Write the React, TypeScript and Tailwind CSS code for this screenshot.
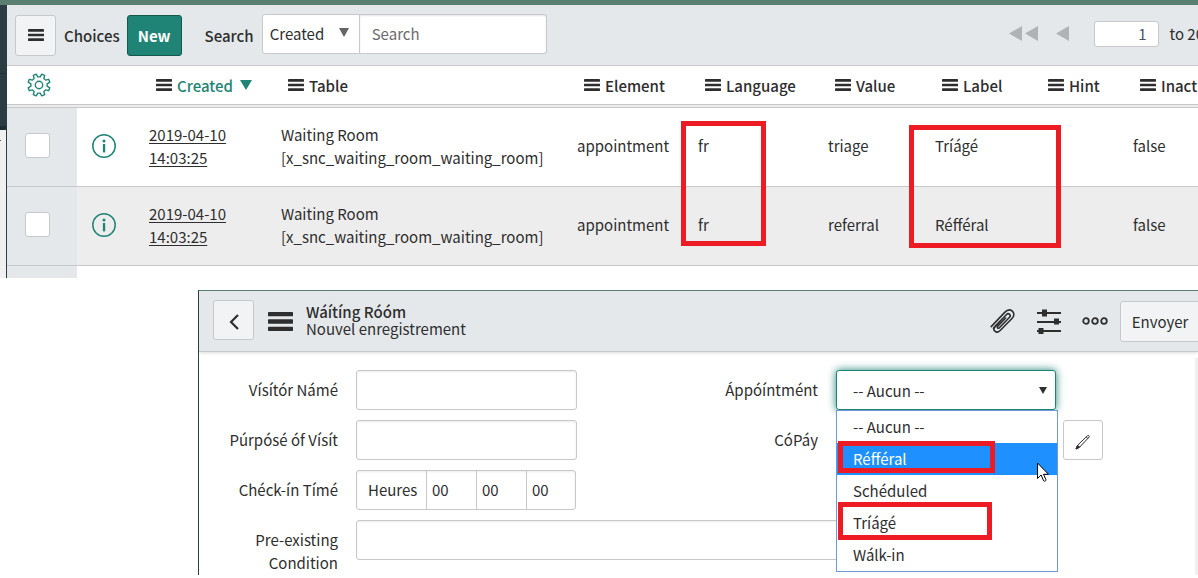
import type { ReactNode } from "react";

const columns = ["Created", "Table", "Element", "Language", "Value", "Label", "Hint", "Inactive"];

const records = [
  { value: "triage", label: "Tríágé" },
  { value: "referral", label: "Réfféral" },
];

const options = ["-- Aucun --", "Réfféral", "Schéduled", "Tríágé", "Wálk-in"];

// Eight teeth, each described by [angle offset in degrees, radius].
const tooth = [
  [-14, 8.2],
  [-8, 11.2],
  [8, 11.2],
  [14, 8.2],
];

const gearPoints = Array.from({ length: 8 }, (_, i) =>
  tooth.map(([offset, radius]) => {
    const angle = ((i * 45 + 22.5 + offset) * Math.PI) / 180;
    return `${(12 + radius * Math.cos(angle)).toFixed(2)},${(12 + radius * Math.sin(angle)).toFixed(2)}`;
  }).join(" "),
).join(" ");

function Bars({ className }: { className: string }) {
  return (
    <svg viewBox="0 0 16 12" className={className} fill="currentColor" preserveAspectRatio="none" aria-hidden="true">
      <rect y="0" width="16" height="2.7" rx="0.4" />
      <rect y="4.65" width="16" height="2.7" rx="0.4" />
      <rect y="9.3" width="16" height="2.7" rx="0.4" />
    </svg>
  );
}

function Gear() {
  return (
    <svg viewBox="0 0 24 24" className="size-6" fill="none" stroke="currentColor" strokeWidth="1.4" strokeLinejoin="round" aria-hidden="true">
      <polygon points={gearPoints} />
      <circle cx="12" cy="12" r="3.7" />
    </svg>
  );
}

function Info() {
  return (
    <svg viewBox="0 0 24 24" className="block size-6" fill="none" aria-hidden="true">
      <circle cx="12" cy="12" r="11.2" stroke="currentColor" strokeWidth="1.5" />
      <circle cx="12" cy="7" r="1.5" fill="currentColor" />
      <rect x="10.9" y="10" width="2.3" height="8.4" fill="currentColor" />
    </svg>
  );
}

function Field({ id, label, children }: { id: string; label: string; children: ReactNode }) {
  return (
    <div className="flex min-h-10 gap-[18px]">
      <label htmlFor={id} className="w-[122px] shrink-0 pt-2 text-right">
        {label}
      </label>
      {children}
    </div>
  );
}

const box = "h-10 rounded-[3px] border border-[#c6c8ca] bg-white shadow-[inset_0_1px_2px_rgba(0,0,0,0.08)] outline-none";

function ChoiceList() {
  return (
    <section className="flex">
      <aside className="flex w-[7px] shrink-0 flex-col border-r border-[#2b3d42]">
        <div className="h-[69px] border-b border-[#203034] bg-[#2b3d42]" />
        <div className="h-14 border-b-4 border-[#1d2d31] bg-[#2b3d42]" />
        <div className="flex-1 bg-[#f0f0f0] pt-2.5">
          <div className="h-px w-px bg-[#555555]" />
        </div>
      </aside>
      <div className="min-w-0 flex-1 overflow-hidden">
        <header className="flex h-[61px] items-center border-b border-[#c6c8ca] bg-[#e4e8eb] px-2">
          <button aria-label="List controls" className="flex h-[41px] w-[41px] items-center justify-center rounded-[3px] border border-[#c6c8ca] bg-[#f1f3f5]">
            <Bars className="h-3 w-4" />
          </button>
          <h1 className="ml-2 font-medium">Choices</h1>
          <button className="ml-[7px] h-[41px] w-[55px] rounded-[3px] border border-[#13594d] bg-[#1f8476] font-bold text-white">New</button>
          <label htmlFor="search" className="ml-[23px] font-medium">
            Search
          </label>
          <div className="relative mb-[3px] ml-2 flex h-10">
            <select aria-label="Search field" className="w-[98px] appearance-none rounded-l-[3px] border border-[#c6c8ca] bg-white pl-[7px] outline-none">
              <option>Created</option>
            </select>
            <svg viewBox="0 0 10 9" className="pointer-events-none absolute top-3.5 left-[77px] h-[9px] w-2.5" fill="#666666" aria-hidden="true">
              <path d="M0 0h10L5 9Z" />
            </svg>
            <input id="search" placeholder="Search" className="w-[187px] rounded-r-[3px] border border-l-0 border-[#c6c8ca] bg-white pl-3 shadow-[inset_0_1px_2px_rgba(0,0,0,0.1)] outline-none placeholder:text-[#6b6b6b]" />
          </div>
          <div className="-mr-3.5 mb-[3px] ml-auto flex shrink-0 items-center text-[#b0b2b4]">
            <button aria-label="First page" className="mr-[18px] flex gap-[3px]">
              <svg viewBox="0 0 13 15" className="h-[15px] w-[13px]" fill="currentColor"><path d="M13 0v15L0 7.5Z" /></svg>
              <svg viewBox="0 0 13 15" className="h-[15px] w-[13px]" fill="currentColor"><path d="M13 0v15L0 7.5Z" /></svg>
            </button>
            <button aria-label="Previous page" className="mr-[25px]">
              <svg viewBox="0 0 13 15" className="h-[15px] w-[13px]" fill="currentColor"><path d="M13 0v15L0 7.5Z" /></svg>
            </button>
            <input aria-label="Row number" defaultValue="1" className="h-[26px] w-[65px] rounded-[3px] border border-[#c6c8ca] bg-white pr-3 text-right text-[#485566] outline-none" />
            <span className="ml-2.5 text-[#2e2e2e]">to 20</span>
          </div>
        </header>
        <div className="relative">
          <table className="w-full table-fixed border-separate border-spacing-0 text-left">
            <colgroup>
              <col className="w-[70px]" />
              <col className="w-[64px]" />
              <col className="w-[132px]" />
              <col className="w-[296px]" />
              <col className="w-[121px]" />
              <col className="w-[130px]" />
              <col className="w-[107px]" />
              <col className="w-[106px]" />
              <col className="w-[92px]" />
              <col />
            </colgroup>
            <thead>
              <tr className="[&>th]:h-[42px] [&>th]:border-b [&>th]:border-[#c6c8ca] [&>th]:pb-[3px] [&>th]:shadow-[inset_0_-2px_0_#ececec,inset_0_-3px_0_#c6c8ca]">
                <th className="pl-5 text-[#1f8476]">
                  <button aria-label="Personalize list" className="block"><Gear /></button>
                </th>
                <th />
                {columns.map((name) => (
                  <th key={name} className="pl-[15px] font-medium whitespace-nowrap">
                    <span className="flex items-center gap-[5px]">
                      <Bars className="h-3 w-4 shrink-0" />
                      {name === "Created" ? (
                        <a href="#created" className="flex items-center gap-[7px] text-[#1f8476]">
                          Created
                          <svg viewBox="0 0 12 10" className="h-2.5 w-3" fill="currentColor" aria-hidden="true"><path d="M0 0h12L6 10Z" /></svg>
                        </a>
                      ) : (
                        <span>{name}</span>
                      )}
                    </span>
                  </th>
                ))}
              </tr>
            </thead>
            <tbody>
              {records.map((record) => (
                <tr key={record.value} className="even:bg-[#ededed] [&>td]:h-[79px] [&>td]:border-b [&>td]:border-[#c6c8ca] [&>td]:pb-[3px] [&>td]:pl-2">
                  <td className="bg-[#e4e8eb]">
                    <input type="checkbox" aria-label={`Select ${record.value}`} className="ml-2.5 block size-[25px] appearance-none rounded-[3px] border border-[#c6c8ca] bg-white" />
                  </td>
                  <td className="text-[#1f8476]">
                    <button aria-label="Preview record" className="ml-[7px] block"><Info /></button>
                  </td>
                  <td><a href="#record" className="block w-20 underline underline-offset-2">2019-04-10 14:03:25</a></td>
                  <td>Waiting Room<br />[x_snc_waiting_room_waiting_room]</td>
                  <td>appointment</td>
                  <td>fr</td>
                  <td>{record.value}</td>
                  <td>{record.label}</td>
                  <td />
                  <td>false</td>
                </tr>
              ))}
            </tbody>
          </table>
          <div className="h-3 w-[70px] bg-[#e4e8eb]" />
          <div className="absolute top-[55px] left-[674px] h-[125px] w-[85px] border-5 border-[#ed1c24]" />
          <div className="absolute top-[59px] left-[902px] h-[123px] w-[152px] border-5 border-[#ed1c24]" />
        </div>
      </div>
    </section>
  );
}

function RecordForm() {
  return (
    <section className="mt-3 ml-[198px] overflow-hidden border-t border-l border-t-[#5a7f71] border-l-[#2b3d42]">
      <header className="relative flex h-[61px] items-center border-b border-[#c6c8ca] bg-[#e4e8eb] pl-3.5 shadow-[0_1px_3px_rgba(0,0,0,0.15)]">
        <button aria-label="Back" className="mb-0.5 flex h-10 w-[41px] items-center justify-center rounded-[3px] border border-[#c6c8ca] bg-[#f1f3f5]">
          <svg viewBox="0 0 10 16" className="mt-1 h-4 w-2.5" fill="none" stroke="currentColor" strokeWidth="2.2" aria-hidden="true"><path d="M9 1 2 8l7 7" /></svg>
        </button>
        <button aria-label="Form menu" className="ml-3.5"><Bars className="h-[19px] w-[25px]" /></button>
        <div className="mb-[3px] ml-[13px] leading-[17px]">
          <h2 className="font-medium">Wáítíng Róóm</h2>
          <p>Nouvel enregistrement</p>
        </div>
        <div className="-mr-0.5 ml-auto flex items-center">
          <button aria-label="Attachments" className="mr-[21px]">
            <svg viewBox="0 0 26 24" className="h-6 w-[26px]" fill="none" stroke="currentColor" strokeWidth="1.6" strokeLinecap="round" strokeLinejoin="round" aria-hidden="true">
              <path d="M1.2 17.6 14.7 3.4c2.4-2.5 5.5-3 7.6-1.2 2.2 2 2 4.9-.3 7.3L9.9 21.8c-1.6 1.6-3.6 1.7-5 .4-1.4-1.4-1.3-3.3.2-4.9L16.3 5.7c1.1-1.1 2.4-1.2 3.3-.4.9.9.8 2.1-.3 3.2L9.4 18.7c-.6.6-1.3.7-1.8.2s-.4-1.2.2-1.8L15.6 9" />
              <path d="M3.5 19.4 10 12.5" />
            </svg>
          </button>
          <button aria-label="Personalize form" className="mr-[21px]">
            <svg viewBox="0 0 24 25" className="h-[25px] w-6" fill="currentColor" aria-hidden="true">
              <path d="M0 3h24v2H0zM0 12h24v2H0zM0 21h24v2H0z" />
              <path d="M5 .5h5v7H5zM17 9.500h5v6h-5zM1.500 19h5v6h-5z" />
            </svg>
          </button>
          <button aria-label="More options" className="mr-3">
            <svg viewBox="0 0 26 8" className="h-2 w-[26px]" fill="none" stroke="currentColor" strokeWidth="1.8" aria-hidden="true">
              <circle cx="4" cy="4" r="2.8" /><circle cx="13" cy="4" r="2.8" /><circle cx="22" cy="4" r="2.8" />
            </svg>
          </button>
          <button className="h-[41px] w-20 rounded-l-[3px] border border-[#c6c8ca] bg-[#f1f3f5]">Envoyer</button>
        </div>
      </header>
      <div className="mt-1.5 border-r-3 border-[#f0f0f0] pt-3 pb-px pl-[17px]">
        <form className="grid grid-cols-[361px_1fr] gap-x-[119px] gap-y-2.5">
          <Field id="visitor" label="Vísítór Námé">
            <input id="visitor" className={`${box} w-[221px]`} />
          </Field>
          <div className="relative flex gap-[18px]">
            <label htmlFor="appointment" className="w-[122px] shrink-0 pt-2 text-right">Áppóíntmént</label>
            <select id="appointment" className="h-10 w-[220px] appearance-none rounded-[3px] border border-[#1f8476] bg-white pl-4 shadow-[0_0_8px_#1f8476] outline-none">
              <option>-- Aucun --</option>
            </select>
            <svg viewBox="0 0 8 8" className="pointer-events-none absolute top-[17px] left-[343px] h-[7px] w-2" fill="currentColor" preserveAspectRatio="none" aria-hidden="true"><path d="M0 0h8L4 8Z" /></svg>
            <ul role="listbox" aria-label="Áppóíntmént" className="absolute top-10 left-[140px] z-10 w-[222px] border border-[#7396d4] bg-white">
              {options.map((option) => (
                <li key={option} role="option" aria-selected={option === "Réfféral"} className="h-8 pl-4 leading-8 aria-selected:bg-[#1e90ff] aria-selected:text-white">
                  {option}
                </li>
              ))}
              <li role="presentation" className="absolute top-[30px] left-px h-8 w-[157px] border-5 border-[#ed1c24]" />
              <li role="presentation" className="absolute top-[91px] left-px h-[38px] w-[154px] border-5 border-[#ed1c24]" />
              <li role="presentation" className="absolute top-[51px] left-[200px]">
                <svg viewBox="0 0 12 20" className="h-5 w-3" fill="white" stroke="black" strokeWidth="1" aria-hidden="true">
                  <path d="M.5 1v15.500l3.600-3.500 2.500 5.800c.7 1 2.800.1 2.300-1.200l-2.400-5.300h5Z" />
                </svg>
              </li>
            </ul>
          </div>
          <Field id="purpose" label="Púrpósé óf Vísít">
            <input id="purpose" className={`${box} w-[221px]`} />
          </Field>
          <div className="flex">
            <label htmlFor="copay" className="mr-[18px] w-[122px] shrink-0 pt-2 text-right">CóPáy</label>
            <input id="copay" className={`${box} w-[220px]`} />
            <button type="button" aria-label="Edit" className="ml-[7px] flex size-10 items-center justify-center rounded-[3px] border border-[#c6c8ca] bg-white">
              <svg viewBox="0 0 16 16" className="mt-1 size-4" fill="none" stroke="currentColor" strokeWidth="1" strokeLinejoin="round" aria-hidden="true">
                <path d="M1 15l1.600-3.800L12.700 1.600c.8-.7 2.200.5 1.500 1.400L4.600 13.200Z" />
                <path d="m1 15 1.600-3.800 2 2Z" fill="currentColor" />
                <path d="m11.300 3 1.600 1.600" />
              </svg>
            </button>
          </div>
          <Field id="hours" label="Chéck-ín Tímé">
            <div className={`${box} flex w-[220px]`}>
              <span className="w-[69px] pt-[7px] pl-[11px]">Heures</span>
              <input id="hours" aria-label="Hours" defaultValue="00" className="w-[50px] border-l border-[#c6c8ca] pb-px pl-[5px] outline-none" />
              <input aria-label="Minutes" defaultValue="00" className="w-[50px] border-l border-[#c6c8ca] pb-px pl-[5px] outline-none" />
              <input aria-label="Seconds" defaultValue="00" className="w-[49px] border-l border-[#c6c8ca] pb-px pl-[5px] outline-none" />
            </div>
          </Field>
          <div className="col-span-2 row-start-4">
            <Field id="condition" label="Pre-existing Condition">
              <input id="condition" className={`${box} w-[700px]`} />
            </Field>
          </div>
        </form>
      </div>
    </section>
  );
}

export default function App() {
  return (
    <main className="min-h-screen overflow-hidden border-t-5 border-[#5a7f71] bg-white font-['Noto_Sans_CJK_SC','Noto_Sans',sans-serif] text-[15px] leading-[23px] text-[#2e2e2e]">
      <ChoiceList />
      <RecordForm />
    </main>
  );
}
